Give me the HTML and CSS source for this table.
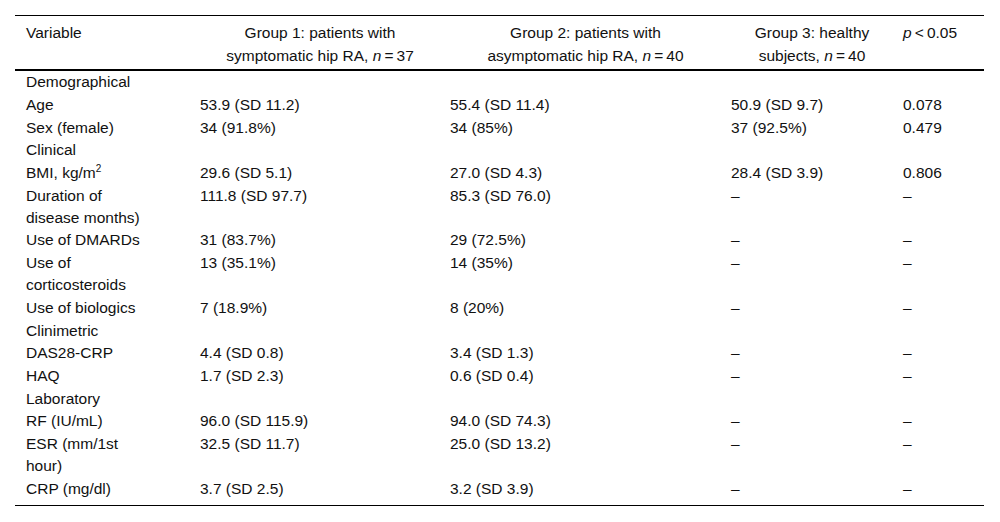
FILE: index.html
```html
<!DOCTYPE html>
<html lang="en">
<head>
<meta charset="utf-8">
<title>Table</title>
<link rel="stylesheet" href="styles.css">
</head>
<body>
<table class="data">
  <colgroup>
    <col class="c1"><col class="c2"><col class="c3"><col class="c4"><col class="c5">
  </colgroup>
  <thead>
    <tr>
      <th class="left first">Variable</th>
      <th class="center">Group 1: patients with<br>symptomatic hip RA, <i>n</i>&#8201;=&#8201;37</th>
      <th class="center">Group 2: patients with<br>asymptomatic hip RA, <i>n</i>&#8201;=&#8201;40</th>
      <th class="center">Group 3: healthy<br>subjects, <i>n</i>&#8201;=&#8201;40</th>
      <th class="left"><i>p</i>&#8201;&lt;&#8201;0.05</th>
    </tr>
  </thead>
  <tbody>
    <tr><td class="first">Demographical</td><td></td><td></td><td></td><td></td></tr>
    <tr><td class="first">Age</td><td>53.9 (SD 11.2)</td><td>55.4 (SD 11.4)</td><td>50.9 (SD 9.7)</td><td>0.078</td></tr>
    <tr><td class="first">Sex (female)</td><td>34 (91.8%)</td><td>34 (85%)</td><td>37 (92.5%)</td><td>0.479</td></tr>
    <tr><td class="first">Clinical</td><td></td><td></td><td></td><td></td></tr>
    <tr><td class="first">BMI, kg/m<sup>2</sup></td><td>29.6 (SD 5.1)</td><td>27.0 (SD 4.3)</td><td>28.4 (SD 3.9)</td><td>0.806</td></tr>
    <tr><td class="first">Duration of disease months)</td><td>111.8 (SD 97.7)</td><td>85.3 (SD 76.0)</td><td>–</td><td>–</td></tr>
    <tr><td class="first">Use of DMARDs</td><td>31 (83.7%)</td><td>29 (72.5%)</td><td>–</td><td>–</td></tr>
    <tr><td class="first">Use of corticosteroids</td><td>13 (35.1%)</td><td>14 (35%)</td><td>–</td><td>–</td></tr>
    <tr><td class="first">Use of biologics</td><td>7 (18.9%)</td><td>8 (20%)</td><td>–</td><td>–</td></tr>
    <tr><td class="first">Clinimetric</td><td></td><td></td><td></td><td></td></tr>
    <tr><td class="first">DAS28-CRP</td><td>4.4 (SD 0.8)</td><td>3.4 (SD 1.3)</td><td>–</td><td>–</td></tr>
    <tr><td class="first">HAQ</td><td>1.7 (SD 2.3)</td><td>0.6 (SD 0.4)</td><td>–</td><td>–</td></tr>
    <tr><td class="first">Laboratory</td><td></td><td></td><td></td><td></td></tr>
    <tr><td class="first">RF (IU/mL)</td><td>96.0 (SD 115.9)</td><td>94.0 (SD 74.3)</td><td>–</td><td>–</td></tr>
    <tr><td class="first">ESR (mm/1st hour)</td><td>32.5 (SD 11.7)</td><td>25.0 (SD 13.2)</td><td>–</td><td>–</td></tr>
    <tr class="last"><td class="first">CRP (mg/dl)</td><td>3.7 (SD 2.5)</td><td>3.2 (SD 3.9)</td><td>–</td><td>–</td></tr>
  </tbody>
</table>
</body>
</html>
```

FILE: styles.css
```css
html, body {
  margin: 0;
  padding: 0;
  background: #ffffff;
}

body {
  font-family: "Liberation Sans", Arial, sans-serif;
  font-size: 15.5px;
  color: #111111;
}

.data {
  margin: 15px 0 0 15px;
  width: 969px;
  table-layout: fixed;
  border-collapse: collapse;
  border-top: 1px solid #000;
  border-bottom: 1px solid #000;
}

.c1 { width: 175px; }
.c2 { width: 250px; }
.c3 { width: 281px; }
.c4 { width: 172px; }
.c5 { width: 91px; }

.data th {
  font-weight: normal;
  line-height: 23px;
  vertical-align: top;
  padding: 5px 0 2px 10px;
  border-bottom: 2px solid #000;
}

.data th.center { text-align: center; }
.data th.left { text-align: left; }

.data td {
  line-height: 22px;
  vertical-align: top;
  padding: 0.35px 0 0.35px 10px;
  white-space: normal;
}

.data .first {
  padding-left: 11px;
  padding-right: 40px;
}

.data tr.last td {
  padding-bottom: 5px;
}

.data sup {
  font-size: 10px;
  line-height: 0;
  vertical-align: 6px;
}
```
